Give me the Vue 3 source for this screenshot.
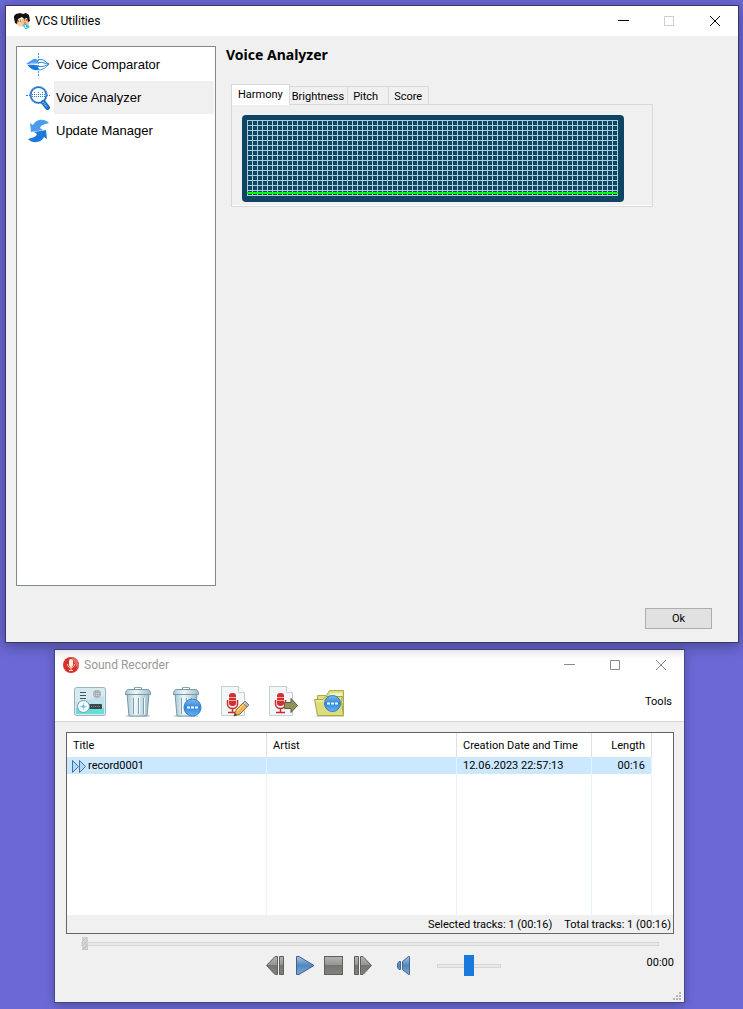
<template>
  <main class="desktop">
    <!-- VCS Utilities -->
    <section class="window utilities">
      <header class="title-bar">
        <svg class="app-icon" viewBox="0 0 16 16">
          <path d="M6 6h9v5l-2 3H8z" fill="#f3c08e"/>
          <path d="M2 6h6v6l-2 2-4-3z" fill="#f7cfa2"/>
          <path d="M0 3l2-2 4-1 3 1 3-1 3 2 1 6-2 1-1-4-3 1-2-2-4 2-1 5-2-1-1-5z" fill="#17100f"/>
          <path d="M4 8h1M6 8h1M10 7h1M12 7h1" stroke="#4b2a20"/>
          <path d="M9 11h3l2 1 2 2-3 2h-2z" fill="#45bdf2"/>
          <path d="M10 10h2" stroke="#d6463d"/>
          <path d="M11 12l1 3" stroke="#fff"/>
        </svg>
        <h1 class="title">VCS Utilities</h1>
        <div class="window-buttons">
          <button class="window-btn" aria-label="Minimize">
            <svg viewBox="0 0 11 11"><path d="M0 4.500h11"/></svg>
          </button>
          <button class="window-btn is-disabled" aria-label="Maximize" disabled>
            <svg viewBox="0 0 11 11"><path d="M.5.5h9v9h-9z"/></svg>
          </button>
          <button class="window-btn" aria-label="Close">
            <svg viewBox="0 0 11 11"><path d="M0 0l10 10M10 0L0 10"/></svg>
          </button>
        </div>
      </header>

      <div class="utilities-body">
        <nav class="tool-list">
          <button
              v-for="tool in tools"
              :key="tool.id"
              class="tool-item"
              :class="{ active: tool.id === activeTool }"
              @click="activeTool = tool.id"
          >
            <svg v-if="tool.id === 'comparator'" class="tool-icon" viewBox="0 0 24 24">
              <path d="M0 11c4-2 7-6 10-5l2 1v4z" fill="#4b9cf0"/>
              <path d="M1 11.500c4 .5 7-.5 11 1V17C7 18 4 15 1 11.500z" fill="#1c78da"/>
              <path d="M4 11c3-1 5-1 8-.5" fill="none" stroke="#b9dafa"/>
              <path d="M13 6.500h2c3 0 5 3 8 4.500-3 3-6 6-10 6M13 9.500c4-.5 6 1 10 1.500-3 1.500-6 3-10 2.500" fill="none" stroke="#2f86dc"/>
              <path d="M12.500 0v24" stroke="#3f94e6" stroke-dasharray="2 1"/>
            </svg>
            <svg v-else-if="tool.id === 'analyzer'" class="tool-icon" viewBox="0 0 24 24">
              <circle cx="12.500" cy="9" r="8" fill="#fff" stroke="#1d6fc4" stroke-width="2"/>
              <circle cx="12.500" cy="9" r="8.500" fill="none" stroke="#a5cdf3" stroke-dasharray="1 1"/>
              <path d="M0 9.500h5M20 9.500h4" stroke="#2f7fd0" stroke-dasharray="2 1"/>
              <path d="M6.500 8v3M8.500 6v5M10.500 8v4M12.500 6v6M14.500 8v4M16.500 6v5M18.500 8v3" stroke="#2f7fd0" stroke-dasharray="1 1"/>
              <path d="M17.500 16.500l4 5" stroke="#1d6fc4" stroke-width="5" stroke-linecap="round"/>
              <path d="M17 16l4 5" stroke="#8cbff0" stroke-width="2" stroke-dasharray="1 1"/>
            </svg>
            <svg v-else class="tool-icon" viewBox="0 0 24 24">
              <path d="M23 4C18-1 10 0 7 6L4 4l1 9 12-2-3-2c1-3 5-4 9-5z" fill="#4b9cf0"/>
              <path d="M2 20c5 5 13 4 16-2l3 2-1-9-12 2 3 2c-1 3-5 4-9 5z" fill="#1c78da"/>
            </svg>
            <span class="tool-label">{{ tool.label }}</span>
          </button>
        </nav>

        <div class="tool-page">
          <h2 class="page-title">Voice Analyzer</h2>
          <div class="tabs" role="tablist">
            <button
                v-for="tab in tabs"
                :key="tab"
                role="tab"
                class="tab"
                :class="{ active: tab === activeTab }"
                :aria-selected="tab === activeTab"
                @click="activeTab = tab"
            >{{ tab }}</button>
          </div>
          <div class="tab-panel" role="tabpanel">
            <div class="scope">
              <div class="scope-grid">
                <div class="scope-line"></div>
              </div>
            </div>
          </div>
        </div>
      </div>

      <footer class="dialog-actions">
        <button class="ok-btn">Ok</button>
      </footer>
    </section>

    <!-- Sound Recorder -->
    <section class="window recorder">
      <header class="title-bar inactive">
        <svg class="app-icon" viewBox="0 0 16 16">
          <circle cx="8" cy="8" r="8" fill="#d8302f"/>
          <path d="M8 0a8 8 0 0 1 7 12z" fill="#e66a62"/>
          <rect x="6" y="2" width="4" height="8" rx="2" fill="#fff3dc"/>
          <path d="M4.500 7c0 5 7 5 7 0M8 11v3M6 13.500h4" fill="none" stroke="#f9d9c5"/>
        </svg>
        <h1 class="title">Sound Recorder</h1>
        <div class="window-buttons">
          <button class="window-btn" aria-label="Minimize">
            <svg viewBox="0 0 11 11"><path d="M0 4.500h11"/></svg>
          </button>
          <button class="window-btn" aria-label="Maximize">
            <svg viewBox="0 0 11 11"><path d="M.5.5h9v9h-9z"/></svg>
          </button>
          <button class="window-btn" aria-label="Close">
            <svg viewBox="0 0 11 11"><path d="M0 0l10 10M10 0L0 10"/></svg>
          </button>
        </div>
      </header>

      <!-- shared gradients -->
      <svg class="defs" aria-hidden="true">
        <defs>
          <linearGradient id="steel" x1="0" x2="1" y1="0" y2="0">
            <stop offset="0" stop-color="#a9c8d5"/>
            <stop offset=".4" stop-color="#eef7fa"/>
            <stop offset="1" stop-color="#9dbdcb"/>
          </linearGradient>
          <linearGradient id="blueBall" x1="0" x2="0" y1="0" y2="1">
            <stop offset="0" stop-color="#7db9f0"/>
            <stop offset=".5" stop-color="#2f86dd"/>
            <stop offset="1" stop-color="#65b5f5"/>
          </linearGradient>
          <linearGradient id="gray" x1="0" x2="0" y1="0" y2="1">
            <stop offset="0" stop-color="#b4b4b0"/>
            <stop offset=".45" stop-color="#969694"/>
            <stop offset=".5" stop-color="#747474"/>
            <stop offset="1" stop-color="#83837c"/>
          </linearGradient>
          <linearGradient id="blue" x1="0" x2="0" y1="0" y2="1">
            <stop offset="0" stop-color="#a3c6df"/>
            <stop offset=".5" stop-color="#5088c0"/>
            <stop offset="1" stop-color="#78acd4"/>
          </linearGradient>
        </defs>
      </svg>

      <div class="toolbar">
        <button class="tool-btn" aria-label="Record">
          <svg viewBox="0 0 32 32">
            <rect x=".5" y="1.500" width="31" height="28" rx="2" fill="#d6eaf0" stroke="#9bb4bf"/>
            <path d="M2 17h28v11H2z" fill="#66dfd4"/>
            <path d="M2 16l28-6v12H2z" fill="#bfe2ea"/>
            <path d="M6 6.500h6M6 9.500h6M6 12.500h6" stroke="#42545e"/>
            <circle cx="23" cy="8" r="4" fill="#a9b0b3"/>
            <path d="M20 7.500h6M20 9.500h6" stroke="#d4d9da" stroke-dasharray="1 1"/>
            <rect x="14" y="18" width="14" height="5" rx="1" fill="#3c464b"/>
            <path d="M17 20.500h10" stroke="#7c878c" stroke-dasharray="1 1"/>
            <circle cx="9.500" cy="20.500" r="6" fill="#f2fafc" stroke="#6f9fc0"/>
            <path d="M9.500 17v7M6 20.500h7" stroke="#9fdcec"/>
            <circle cx="9.500" cy="20.500" r="1.500" fill="#6bbbe0"/>
          </svg>
        </button>
        <button v-for="kind in ['Delete', 'Delete all']" :key="kind" class="tool-btn" :aria-label="kind">
          <svg viewBox="0 0 32 32">
            <path d="M4 30h24" stroke="#d9dedf" stroke-width="2"/>
            <path d="M5 8h22l-2 22H7z" fill="url(#steel)" stroke="#7898a6"/>
            <path d="M11.500 12v16M16.500 12v16M21.500 12v16" stroke="#809fae"/>
            <path d="M12.500 12v16M17.500 12v16M22.500 12v16" stroke="#f3fafc"/>
            <path d="M12.500 3V1.500h7V3" fill="none" stroke="#8ba5b0"/>
            <path d="M3.500 8.500c0-3 1-5 3-5h19c2 0 3 2 3 5z" fill="url(#steel)" stroke="#7898a6"/>
            <g v-if="kind === 'Delete all'">
              <circle cx="22.500" cy="21.500" r="8.500" fill="url(#blueBall)" stroke="#357bc0"/>
              <path d="M17 21.500h3M21 21.500h3M25 21.500h3" stroke="#fff" stroke-width="2"/>
            </g>
          </svg>
        </button>
        <button v-for="kind in ['Edit', 'Export']" :key="kind" class="tool-btn" :aria-label="kind">
          <svg viewBox="0 0 32 32">
            <path d="M3.500.5h17l6 6v23h-23z" fill="#f2f7f9" stroke="#c5ced2"/>
            <path d="M20.500.5v6h6" fill="#fff" stroke="#c5ced2"/>
            <rect x="11" y="7" width="7" height="13" rx="3" fill="#d22f31"/>
            <path d="M11 11.500h7M11 14.500h7" stroke="#f5a9a4"/>
            <path d="M9.500 14v4c0 6 10 6 10 0v-4M14.500 22v4M10 26.500h9" fill="none" stroke="#c92b2d" stroke-width="1.500"/>
            <g v-if="kind === 'Edit'">
              <path d="M16 30l2-6 9-9 4 4-9 9z" fill="#f0b64c" stroke="#95703c"/>
              <path d="M25 17l2-2 4 4-2 2z" fill="#c0b8b8" stroke="#8a7f7f"/>
              <path d="M19 25l8-8" stroke="#ffe3a0"/>
              <path d="M16 30l1-3 2 2z" fill="#43403c"/>
            </g>
            <path v-else d="M18.500 16.500H25v-4l6.500 7-6.500 7v-4h-6.500z" fill="#919158" stroke="#5c5d40"/>
          </svg>
        </button>
        <button class="tool-btn" aria-label="Open folder">
          <svg viewBox="0 0 32 32">
            <path d="M3.500 28V9.500h9l3-5H29.500V28z" fill="#dfdf80" stroke="#a9a956"/>
            <path d="M16 7h12v8H16z" fill="#f3f2bd"/>
            <path d="M.5 13.500H9l3-3h16.500l-1 5 2 14H3.500z" fill="#dcdd7c" stroke="#a5a64d"/>
            <path d="M2 15h9l3-3" fill="none" stroke="#f5f5c0"/>
            <path d="M2 30.500h28" stroke="#d4d5cc"/>
            <circle cx="18.500" cy="17.500" r="8" fill="url(#blueBall)" stroke="#357bc0"/>
            <path d="M13 17.500h3M17 17.500h3M21 17.500h3" stroke="#fff" stroke-width="2"/>
          </svg>
        </button>
        <button class="menu-btn">Tools</button>
      </div>

      <div class="recorder-body">
        <div class="track-box">
          <table class="tracks">
            <colgroup>
              <col class="col-title"><col class="col-artist"><col class="col-date"><col class="col-length"><col>
            </colgroup>
            <thead>
              <tr>
                <th>Title</th>
                <th>Artist</th>
                <th>Creation Date and Time</th>
                <th class="right">Length</th>
                <th></th>
              </tr>
            </thead>
            <tbody>
              <tr v-for="track in tracks" :key="track.title" class="selected">
                <td class="track-title">
                  <svg viewBox="0 0 16 13">
                    <path d="M1.500.5l6 6-6 6zM8.500.5l6 6-6 6z" fill="#b3daf5" stroke="#4a6f9c"/>
                  </svg>{{ track.title }}
                </td>
                <td>{{ track.artist }}</td>
                <td>{{ track.created }}</td>
                <td class="right">{{ track.length }}</td>
                <td class="rest"></td>
              </tr>
              <tr class="filler"><td></td><td></td><td></td><td></td><td></td></tr>
            </tbody>
          </table>
          <div class="track-status">
            <span>Selected tracks: 1 (00:16)</span>
            <span>Total tracks: 1 (00:16)</span>
          </div>
        </div>

        <input v-model="position" class="seek" type="range" min="0" max="100" aria-label="Position" disabled>

        <div class="player">
          <button class="play-btn" aria-label="Previous">
            <svg viewBox="0 0 20 20">
              <path d="M.5 9.500L9 .5h2.500v18H9zM13.500.5h4v18h-4z" fill="url(#gray)" stroke="#5f5f5c"/>
            </svg>
          </button>
          <button class="play-btn" aria-label="Play">
            <svg viewBox="0 0 20 20">
              <path d="M1.500.5H4l15 9-15 9H1.500z" fill="url(#blue)" stroke="#4c5c8d"/>
            </svg>
          </button>
          <button class="play-btn" aria-label="Stop">
            <svg viewBox="0 0 20 20">
              <rect x=".5" y=".5" width="18" height="18" fill="url(#gray)" stroke="#5f5f5c"/>
            </svg>
          </button>
          <button class="play-btn" aria-label="Next">
            <svg viewBox="0 0 20 20">
              <path d="M1.500.5h4v18h-4zM7.500.5H10l8.500 9-8.500 9H7.500z" fill="url(#gray)" stroke="#5f5f5c"/>
            </svg>
          </button>
          <button class="play-btn mute-btn" aria-label="Mute">
            <svg viewBox="0 0 20 20">
              <path d="M3 5.500h1.500v8H3l-1.500-2v-4zM6.500 5.500l6-5h1v18h-1l-6-5z" fill="url(#blue)" stroke="#46658f"/>
            </svg>
          </button>
          <input v-model="volume" class="volume" type="range" min="0" max="100" aria-label="Volume">
          <time class="clock">00:00</time>
        </div>
      </div>

      <svg class="grip" viewBox="0 0 9 9">
        <path d="M6 1h2M3 4h2M6 4h2M0 7h2M3 7h2M6 7h2" stroke="#b5b5b5" stroke-width="2"/>
      </svg>
    </section>
  </main>
</template>

<script setup>
import { ref } from 'vue'

const tools = [
  { id: 'comparator', label: 'Voice Comparator' },
  { id: 'analyzer', label: 'Voice Analyzer' },
  { id: 'updates', label: 'Update Manager' }
]
const tabs = ['Harmony', 'Brightness', 'Pitch', 'Score']
const tracks = [
  { title: 'record0001', artist: '', created: '12.06.2023 22:57:13', length: '00:16' }
]

const activeTool = ref('analyzer')
const activeTab = ref('Harmony')
const position = ref(0)
const volume = ref(50)
</script>

<style>
body { background: #6b69d6; }
</style>

<style scoped>
.desktop {
  display: flex;
  flex-direction: column;
  gap: 7px;
  box-sizing: border-box;
  min-height: 100vh;
  padding: 5px 4px 7px 5px;
  background: #6b69d6;
  color: #000;
  font-family: Roboto, "Liberation Sans", sans-serif;
  font-size: 11px;
  line-height: 16px;
}
button {
  padding: 0;
  border: 0;
  background: none;
  color: inherit;
  font: inherit;
}
svg { display: block; }
.defs { position: absolute; width: 0; height: 0; }

/* windows */
.window { background: #f0f0f0; }
.utilities {
  position: relative;
  z-index: 1;
  border: 1px solid #39375f;
  box-shadow: 0 3px 14px rgba(0, 0, 0, 0.35);
}
.recorder {
  position: relative;
  margin: 0 55px 0 50px;
  box-shadow: 0 0 0 1px rgba(50, 50, 90, 0.5), 0 3px 10px rgba(0, 0, 0, 0.3);
}
.title-bar {
  display: flex;
  align-items: center;
  height: 30px;
  padding-left: 8px;
  background: #fff;
}
.app-icon { width: 16px; height: 16px; }
.title {
  flex: 1;
  margin: 0 0 0 5px;
  font-size: 12px;
  font-weight: 400;
}
.window-buttons { display: flex; }
.window-btn {
  display: flex;
  align-items: center;
  justify-content: center;
  width: 46px;
  height: 30px;
}
.window-btn svg {
  width: 11px;
  height: 11px;
  fill: none;
  stroke: #000;
}
.window-btn.is-disabled svg { stroke: #ccc; }
.inactive .title { color: #999; }
.inactive .window-btn svg { stroke: #8b8b8b; }

/* utilities content */
.utilities-body {
  display: flex;
  gap: 10px;
  padding: 10px 10px 0;
}
.tool-list {
  flex: 0 0 200px;
  box-sizing: border-box;
  min-height: 540px;
  padding: 1px 1px 0 9px;
  border: 1px solid #828790;
  background: #fff;
}
.tool-item {
  display: flex;
  align-items: center;
  gap: 4px;
  width: 100%;
  height: 33px;
  text-align: left;
}
.tool-icon { width: 24px; height: 24px; }
.tool-label {
  flex: 1;
  padding-left: 2px;
  font-family: "Liberation Sans", Arial, sans-serif;
  font-size: 13px;
  line-height: 33px;
}
.tool-item.active .tool-label { background: #f0f0f0; }
.tool-page { flex: 1; }
.page-title {
  margin: 0 0 20px;
  font-family: "Noto Sans", sans-serif;
  font-size: 14px;
  font-weight: 700;
  line-height: 18px;
}
.tabs {
  display: flex;
  align-items: flex-end;
  margin-left: 5px;
}
.tab {
  height: 18px;
  padding: 2px 10px 0 5px;
  border: 1px solid #d9d9d9;
  border-width: 1px 1px 0 0;
}
.tab:nth-child(2) { padding: 2px 3px 0 2px; }
.tab.active {
  height: 21px;
  margin-bottom: -1px;
  padding: 0 6px;
  border-left-width: 1px;
  background: #fff;
}
.tab:last-child { padding-right: 6px; }
.tab-panel {
  box-sizing: border-box;
  max-width: 422px;
  margin-left: 5px;
  padding: 10px 28px 4px 10px;
  border: 1px solid #d9d9d9;
  box-shadow: inset 0 -1px #fff;
}
.scope {
  padding: 5px 6px 6px 5px;
  border-radius: 4px;
  background: #0f4563;
}
.scope-grid {
  display: flex;
  flex-direction: column;
  justify-content: flex-end;
  height: 76px;
  background-image:
    linear-gradient(#a5cfd9 1px, transparent 1px),
    linear-gradient(90deg, #a5cfd9 1px, transparent 1px);
  background-size: 5px 5px;
}
.scope-line {
  height: 2px;
  margin-bottom: 2px;
  background: #0f0;
}
.dialog-actions {
  display: flex;
  justify-content: flex-end;
  padding: 22px 26px 13px;
}
.ok-btn {
  width: 67px;
  height: 21px;
  border: 1px solid #adadad;
  background: #e1e1e1;
}

/* recorder toolbar */
.toolbar {
  display: flex;
  gap: 16px;
  padding: 6px 12px 3px 19px;
  border-bottom: 1px solid #d5d5d5;
  background: #fff;
}
.tool-btn svg { width: 32px; height: 32px; }
.menu-btn { margin-left: auto; }

/* track table */
.recorder-body { padding: 10px 10px 0 11px; }
.track-box {
  border: 1px solid #646464;
  background: #fff;
}
.tracks {
  width: 100%;
  border-collapse: separate;
  border-spacing: 0;
  table-layout: fixed;
}
.col-title { width: 200px; }
.col-artist { width: 190px; }
.col-date { width: 135px; }
.col-length { width: 60px; }
.tracks th,
.tracks td {
  padding: 1px 6px 0;
  border-right: 1px solid #e5f3fb;
  font-weight: 400;
  line-height: 16px;
  text-align: left;
  white-space: nowrap;
}
.tracks th {
  height: 23px;
  border-color: #e0e0e0;
}
.tracks td { height: 16px; }
.tracks th:last-child,
.tracks td:last-child { border-right: 0; }
.tracks .right { text-align: right; }
.selected td { background: #cce8ff; }
.selected .rest { background: #fff; }
.tracks .track-title { padding-left: 4px; }
.track-title svg {
  display: inline-block;
  width: 16px;
  height: 13px;
  margin-right: 1px;
  vertical-align: middle;
}
.tracks .filler td { height: 140px; }
.track-status {
  display: flex;
  justify-content: flex-end;
  gap: 12px;
  height: 18px;
  padding-right: 2px;
  background: #f0f0f0;
  line-height: 20px;
}

/* sliders */
.seek,
.volume {
  display: block;
  margin: 0;
  appearance: none;
  background: none;
}
.seek {
  width: calc(100% - 30px);
  height: 13px;
  margin: 3px 15px 0;
}
.seek::-webkit-slider-runnable-track,
.volume::-webkit-slider-runnable-track {
  box-sizing: border-box;
  height: 4px;
  border: 1px solid #d6d6d6;
  background: #e7eaea;
}
.seek::-webkit-slider-thumb {
  width: 6px;
  height: 13px;
  margin-top: -6px;
  appearance: none;
  background: repeating-linear-gradient(135deg, #c4c8c0 0 1px, #d2d2d2 1px 3px);
}
.volume {
  width: 64px;
  height: 21px;
  margin-left: 12px;
}
.volume::-webkit-slider-thumb {
  width: 10px;
  height: 21px;
  margin-top: -10px;
  appearance: none;
  background: #1979dc;
}

/* player */
.player {
  display: flex;
  align-items: center;
  gap: 9px;
  padding: 5px 0 26px 200px;
}
.play-btn svg { width: 20px; height: 20px; }
.mute-btn { margin-left: 14px; }
.clock {
  align-self: flex-start;
  margin-left: auto;
}
.grip {
  position: absolute;
  right: 2px;
  bottom: 1px;
  width: 9px;
  height: 9px;
}
</style>
